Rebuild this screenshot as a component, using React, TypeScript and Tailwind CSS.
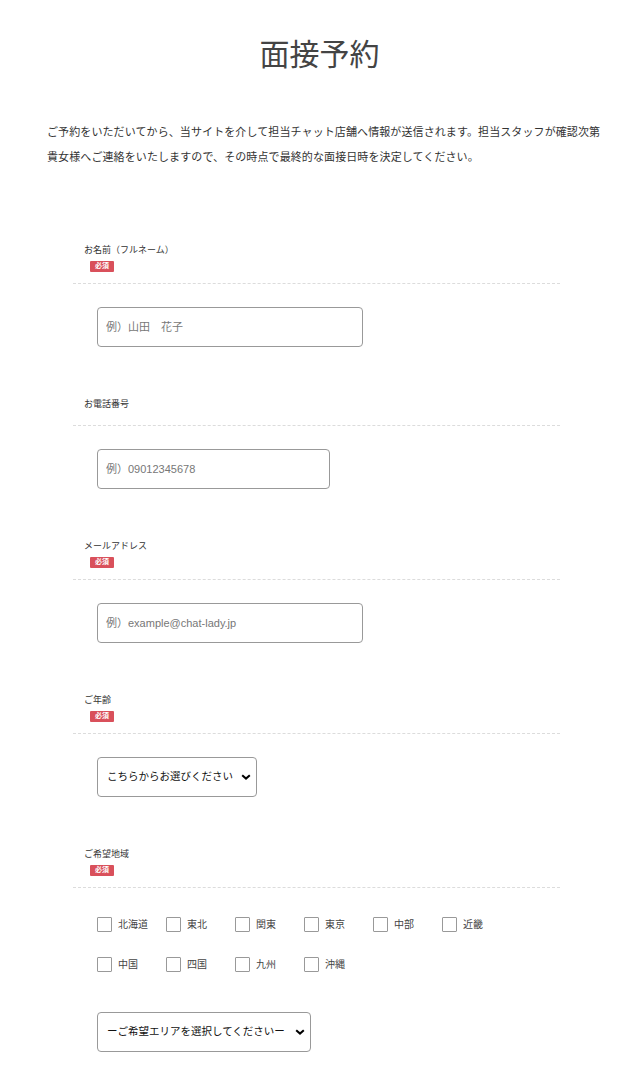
import type { ReactNode } from 'react';

const REGIONS = [
  '北海道',
  '東北',
  '関東',
  '東京',
  '中部',
  '近畿',
  '中国',
  '四国',
  '九州',
  '沖縄',
];

interface FieldProps {
  label: string;
  required?: boolean;
  children: ReactNode;
}

const RequiredBadge = () => (
  <span className="mt-[1px] ml-[6px] flex h-[11px] w-[24px] items-center justify-center rounded-[1px] bg-[#d9505b] text-[7px] font-bold text-white">
    必須
  </span>
);

/**
 * One row of the reservation form: label (+ badge), dashed rule, control.
 */
const Field = ({ label, required, children }: FieldProps) => (
  <div>
    <div className="border-b border-dashed border-[#dcdcdc] pb-[11px] pl-[11px]">
      <p className="text-[9px] leading-[20px] text-[#333]">{label}</p>
      {required && <RequiredBadge />}
    </div>
    <div className="pt-[23px] pb-[47px] pl-[24px]">{children}</div>
  </div>
);

const TextInput = ({
  placeholder,
  width,
}: {
  placeholder: string;
  width: string;
}) => (
  <input
    type="text"
    placeholder={placeholder}
    className={`${width} h-[40px] rounded-[4px] border border-[#999] bg-white pl-[8px] text-[11px] text-[#333] outline-none placeholder:text-[#777]`}
  />
);

const Select = ({ text, width }: { text: string; width: string }) => (
  <div className={`relative ${width}`}>
    <select className="h-[40px] w-full appearance-none rounded-[4px] border border-[#999] bg-white pl-[9px] text-[10.5px] text-[#111] outline-none">
      <option>{text}</option>
    </select>
    <svg
      className="pointer-events-none absolute top-[17px] right-[6px] h-[6px] w-[10px]"
      viewBox="0 0 10 6"
      fill="none"
    >
      <path d="M1.2 1.2L5 4.6l3.8-3.4" stroke="#000" strokeWidth="2" />
    </svg>
  </div>
);

export default function App() {
  return (
    <div
      className="min-h-[1077px] w-[639px] bg-white pt-[35px] text-[#333]"
      style={{ fontFamily: '"Liberation Sans", "Noto Sans CJK JP", sans-serif' }}
    >
      {/* Title */}
      <h1 className="text-center text-[30px] leading-[40px] font-normal text-[#444]">
        面接予約
      </h1>

      {/* Lead text */}
      <p className="mt-[45px] ml-[47px] text-[11px] leading-[25px] tracking-[0.1px] text-[#333]">
        ご予約をいただいてから、当サイトを介して担当チャット店舗へ情報が送信されます。担当スタッフが確認次第
        <br />
        貴女様へご連絡をいたしますので、その時点で最終的な面接日時を決定してください。
      </p>

      {/* Form */}
      <form className="mt-[70px] ml-[73px] w-[487px]">
        <Field label="お名前（フルネーム）" required>
          <TextInput placeholder="例）山田　花子" width="w-[266px]" />
        </Field>

        <Field label="お電話番号">
          <TextInput placeholder="例）09012345678" width="w-[233px]" />
        </Field>

        <Field label="メールアドレス" required>
          <TextInput placeholder="例）example@chat-lady.jp" width="w-[266px]" />
        </Field>

        <Field label="ご年齢" required>
          <Select text="こちらからお選びください" width="w-[160px]" />
        </Field>

        {/* Region: checkbox grid + area select */}
        <div>
          <div className="border-b border-dashed border-[#dcdcdc] pb-[11px] pl-[11px]">
            <p className="text-[9px] leading-[20px] text-[#333]">ご希望地域</p>
            <RequiredBadge />
          </div>
          <div className="pt-[29px] pl-[24px]">
            <div className="grid w-[414px] grid-cols-6 gap-y-[25px]">
              {REGIONS.map((region) => (
                <label key={region} className="flex h-[15px] items-center gap-[6px]">
                  <input
                    type="checkbox"
                    className="h-[15px] w-[15px] appearance-none rounded-[1px] border border-[#999] bg-white"
                  />
                  <span className="text-[10px] text-[#444]">{region}</span>
                </label>
              ))}
            </div>
            <div className="mt-[40px]">
              <Select text="ーご希望エリアを選択してくださいー" width="w-[214px]" />
            </div>
          </div>
        </div>
      </form>
    </div>
  );
}
